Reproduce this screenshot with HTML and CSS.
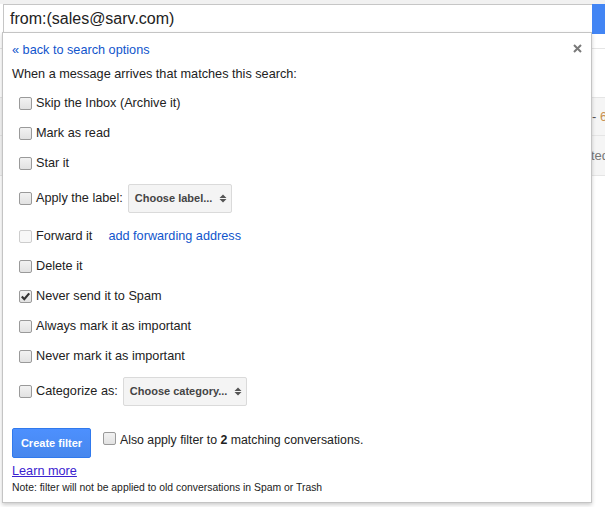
FILE: index.html
```html
<!DOCTYPE html>
<html lang="en">
<head>
<meta charset="utf-8">
<title>Create filter</title>
<link rel="stylesheet" href="styles.css">
</head>
<body>
<div class="topband"></div>
<div class="searchrow">
  <div class="searchbox">from:(sales@sarv.com)</div>
  <div class="searchbtn"></div>
</div>
<div class="toolbar"></div>
<div class="maillist">
  <div class="mailrow"><span class="hidden-col"></span><span class="date"><span class="dash">- </span><span class="num">6</span></span></div>
  <div class="mailrow snip-row"><span class="hidden-col"></span><span class="snip">ted</span></div>
</div>

<div class="panel">
  <div class="panel-head">
    <a class="link" href="#">« back to search options</a>
    <svg class="close" width="9" height="9" viewBox="0 0 9 9"><path d="M1 1L8 8M8 1L1 8" stroke="#7a7a7a" stroke-width="2"/></svg>
  </div>
  <div class="intro">When a message arrives that matches this search:</div>
  <div class="options">
    <div class="row"><span class="cb"></span><span>Skip the Inbox (Archive it)</span></div>
    <div class="row"><span class="cb"></span><span>Mark as read</span></div>
    <div class="row"><span class="cb"></span><span>Star it</span></div>
    <div class="row tall"><span class="cb"></span><span>Apply the label:</span>
      <span class="select">Choose label...<svg class="arrows" width="8" height="9" viewBox="0 0 8 9"><path d="M0.5 4L4 0.5L7.5 4Z M0.5 5L4 8.5L7.5 5Z" fill="#555"/></svg></span>
    </div>
    <div class="row fwd"><span class="cb disabled"></span><span>Forward it</span><a class="link addfwd" href="#">add forwarding address</a></div>
    <div class="row"><span class="cb"></span><span>Delete it</span></div>
    <div class="row"><span class="cb checked"><svg width="11" height="11" viewBox="0 0 11 11"><path d="M1.8 5.6L4.3 8.2L9.2 2.4" stroke="#333" stroke-width="2.2" fill="none"/></svg></span><span>Never send it to Spam</span></div>
    <div class="row"><span class="cb"></span><span>Always mark it as important</span></div>
    <div class="row"><span class="cb"></span><span>Never mark it as important</span></div>
    <div class="row tall"><span class="cb"></span><span>Categorize as:</span>
      <span class="select">Choose category...<svg class="arrows" width="8" height="9" viewBox="0 0 8 9"><path d="M0.5 4L4 0.5L7.5 4Z M0.5 5L4 8.5L7.5 5Z" fill="#555"/></svg></span>
    </div>
  </div>
  <div class="actions">
    <button class="create">Create filter</button>
    <div class="apply"><span class="cb"></span><span>Also apply filter to <b>2</b> matching conversations.</span></div>
  </div>
  <a class="learn" href="#">Learn more</a>
  <div class="note">Note: filter will not be applied to old conversations in Spam or Trash</div>
</div>
</body>
</html>
```

FILE: styles.css
```css
html, body {
  margin: 0;
  padding: 0;
}
body {
  width: 605px;
  height: 507px;
  overflow: hidden;
  background: #fff;
  font-family: "Liberation Sans", Arial, sans-serif;
  font-size: 13px;
  color: #222;
  position: relative;
}
.topband {
  height: 4px;
  background: #f1f1f1;
}
.searchrow {
  display: flex;
  padding-left: 3px;
  background: #fff;
}
.searchbox {
  width: 582px;
  height: 27px;
  border: 1px solid #c6c6c6;
  border-right: none;
  padding-left: 6px;
  font-size: 16px;
  line-height: 27px;
  color: #222;
}
.searchbtn {
  flex: 1;
  height: 30px;
  background: #4285f4;
}
.toolbar {
  height: 14px;
  border-bottom: 1px solid #e5e5e5;
}
.maillist {
  margin-top: 48px;
  border-top: 1px solid #e5e5e5;
}
.mailrow {
  display: grid;
  grid-template-columns: 592px 1fr;
  height: 37px;
  align-items: center;
  background: #f5f5f5;
  border-bottom: 1px solid #e5e5e5;
  white-space: nowrap;
  overflow: hidden;
  color: #777;
}
.mailrow.snip-row {
  height: 39px;
  grid-template-columns: 591px 1fr;
}
.dash { color: #555; }
.num { color: #c8914f; }
.snip { color: #777; }

.panel {
  position: absolute;
  left: 2px;
  top: 32px;
  width: 570px;
  border: 1px solid #c4c4c4;
  background: #fff;
  box-shadow: 0 2px 4px rgba(0, 0, 0, 0.2);
  padding: 9px 9px 8px 9px;
  font-size: 12.7px;
}
.panel-head {
  display: flex;
  justify-content: space-between;
  align-items: flex-start;
  line-height: 16px;
}
.close {
  margin-top: 2px;
}
.link {
  color: #1155cc;
  text-decoration: none;
}
.intro {
  margin-top: 8px;
  line-height: 16px;
}
.options {
  margin-top: 6px;
  padding-left: 7px;
}
.row {
  display: flex;
  align-items: center;
  height: 30px;
  gap: 4px;
}
.row.tall {
  height: 40px;
}
.row.fwd {
  margin-top: 3px;
}
.cb {
  box-sizing: border-box;
  width: 13px;
  height: 13px;
  border: 1px solid #9a9a9a;
  border-radius: 2px;
  background: linear-gradient(#f2f2f2, #e2e2e2);
  flex: none;
  margin-top: 1px;
  display: flex;
  align-items: center;
  justify-content: center;
}
.cb.disabled {
  border-color: #cdcdcd;
  background: #f7f7f7;
}
.cb svg { display: block; }
.addfwd {
  margin-left: 12px;
}
.select {
  display: inline-flex;
  align-items: center;
  box-sizing: border-box;
  height: 29px;
  margin-left: 1px;
  padding: 0 4px 0 6px;
  gap: 7px;
  background: #f4f4f4;
  border: 1px solid #dadada;
  border-radius: 2px;
  font-size: 11px;
  font-weight: bold;
  color: #444;
}
.arrows { display: block; }
.actions {
  display: flex;
  align-items: flex-start;
  margin-top: 17px;
}
.create {
  box-sizing: border-box;
  width: 79px;
  height: 30px;
  border: 1px solid #3079ed;
  border-radius: 2px;
  background: linear-gradient(#4d90fe, #4787ed);
  color: #fff;
  font-family: "Liberation Sans", Arial, sans-serif;
  font-size: 11px;
  font-weight: bold;
  padding: 0;
}
.apply {
  display: flex;
  align-items: flex-start;
  gap: 4px;
  margin-left: 12px;
  margin-top: 4px;
  line-height: 16px;
  font-size: 12.3px;
}
.apply .cb {
  margin-top: 0;
}
.learn {
  display: block;
  margin-top: 5px;
  line-height: 16px;
  color: #3a22d0;
  text-decoration: underline;
  width: max-content;
}
.note {
  margin-top: 2px;
  font-size: 10.4px;
  line-height: 13px;
  color: #222;
}
```
